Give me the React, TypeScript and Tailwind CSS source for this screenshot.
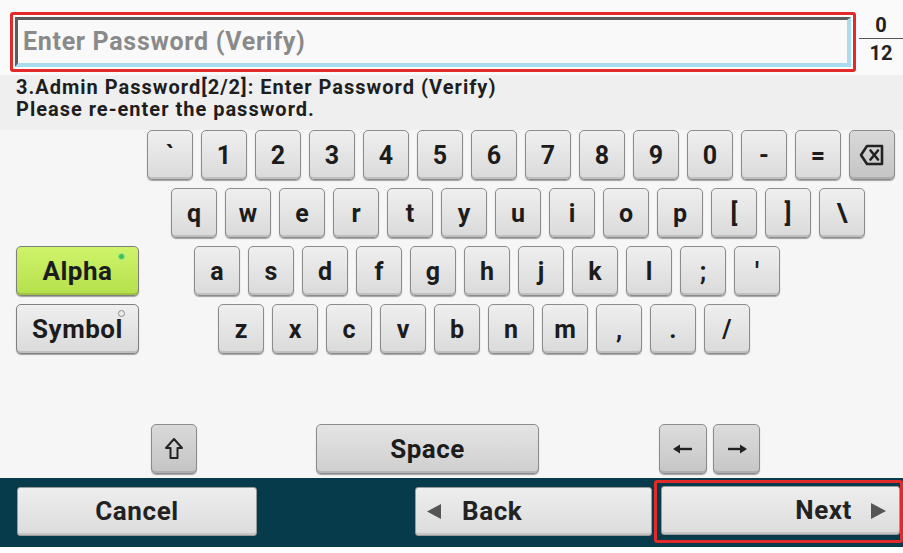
import React from 'react';

const ROW1 = ['`', '1', '2', '3', '4', '5', '6', '7', '8', '9', '0', '-', '='];
const ROW2 = ['q', 'w', 'e', 'r', 't', 'y', 'u', 'i', 'o', 'p', '[', ']', '\\'];
const ROW3 = ['a', 's', 'd', 'f', 'g', 'h', 'j', 'k', 'l', ';', "'"];
const ROW4 = ['z', 'x', 'c', 'v', 'b', 'n', 'm', ',', '.', '/'];

const keyBase =
  'flex items-center justify-center h-[50px] rounded-[5px] border border-[#8c8c8c] shadow-[inset_0_-2px_0_rgba(0,0,0,0.12),0_1px_1px_rgba(0,0,0,0.35)] text-[25px] font-bold text-[#1c1c1c] leading-none';

function Key({ label }: { label: string }) {
  return (
    <div className={`${keyBase} w-[46px] bg-gradient-to-b from-[#efefef] to-[#dadada]`}>
      {label}
    </div>
  );
}

function BackspaceIcon() {
  return (
    <svg width="26" height="22" viewBox="0 0 26 22" fill="none">
      <path d="M8 2 H23 V20 H8 L2 11 Z" stroke="#222" strokeWidth="2.6" strokeLinejoin="round" />
      <path d="M11.5 6.5 L19 15.5 M19 6.5 L11.5 15.5" stroke="#222" strokeWidth="2.6" strokeLinecap="round" />
    </svg>
  );
}

function ShiftIcon() {
  return (
    <svg width="20" height="24" viewBox="0 0 20 24" fill="none">
      <path d="M10 2 L18 11 H13.5 V21 H6.5 V11 H2 Z" stroke="#222" strokeWidth="2" strokeLinejoin="round" />
    </svg>
  );
}

function ArrowIcon({ dir }: { dir: 'left' | 'right' }) {
  return (
    <svg width="22" height="12" viewBox="0 0 22 12" fill="none" style={dir === 'right' ? { transform: 'scaleX(-1)' } : undefined}>
      <path d="M3 6 H20" stroke="#222" strokeWidth="2.4" />
      <path d="M1 6 L8 1.5 V10.5 Z" fill="#222" />
    </svg>
  );
}

function ModeButton({ label, active }: { label: string; active?: boolean }) {
  return (
    <div
      className={`relative flex items-center justify-center ml-4 w-[123px] h-[50px] rounded-[5px] border border-[#7f7f7f] shadow-[inset_0_-2px_0_rgba(0,0,0,0.12),0_1px_1px_rgba(0,0,0,0.35)] text-[26px] tracking-[0.5px] font-bold text-[#1c1c1c] ${
        active ? 'bg-gradient-to-b from-[#cff36a] to-[#b5e04a]' : 'bg-gradient-to-b from-[#efefef] to-[#dadada]'
      }`}
    >
      {label}
      {active ? (
        <span className="absolute right-[13px] top-[6px] w-[7px] h-[7px] rounded-full bg-[#38c447] border border-[#9be39f]" />
      ) : (
        <span className="absolute right-[13px] top-[5px] w-[7px] h-[7px] rounded-full border-[1.5px] border-[#8a8a8a]" />
      )}
    </div>
  );
}

function BarButton({ children, className }: { children: React.ReactNode; className?: string }) {
  return (
    <div
      className={`flex items-center h-[49px] rounded-[3px] border border-[#9a9a9a] bg-gradient-to-b from-[#eeeeee] to-[#dcdcdc] shadow-[inset_0_-2px_0_rgba(0,0,0,0.1)] text-[26px] tracking-[0.6px] font-bold text-[#222] ${className ?? ''}`}
    >
      {children}
    </div>
  );
}

export default function App() {
  return (
    <div className="w-[903px] h-[553px] bg-white flex flex-col font-['Roboto','Liberation_Sans',sans-serif] select-none">
      {/* input row */}
      <div className="h-[75px] bg-[#fafafa] flex items-start">
        <div className="mt-[12px] ml-[10px] w-[846px] h-[60px] border-[3px] border-[#e32a2a] rounded-[3px] p-[2px]">
          <div className="h-full flex items-center border-t-[3px] border-l-[3px] border-[#5c5c5c] border-r-[4px] border-b-[4px] border-r-[#a9dcf1] border-b-[#a9dcf1] bg-[#f9f9f9] pl-[5px]">
            <span className="text-[25px] tracking-[0.7px] font-bold text-[#8a8a8a] leading-none">Enter Password (Verify)</span>
          </div>
        </div>
        <div className="flex-1 flex flex-col items-center mt-[13px] ml-[3px] text-[20px] font-bold text-[#222] leading-none">
          <span className="h-[23px] flex items-center">0</span>
          <span className="w-full h-[1px] bg-[#555] my-[2px]" />
          <span className="h-[23px] flex items-center">12</span>
        </div>
      </div>

      {/* message */}
      <div className="h-[55px] bg-[#efefef] pl-[16px] pt-[1px] text-[20px] tracking-[1px] leading-[22px] font-bold text-[#1e1e1e]">
        <div>3.Admin Password[2/2]: Enter Password (Verify)</div>
        <div>Please re-enter the password.</div>
      </div>

      {/* keyboard */}
      <div className="flex-1 bg-[#f6f6f6] flex flex-col">
        <div className="flex flex-col gap-[8px]">
          <div className="flex">
            <div className="w-[147px]" />
            <div className="flex gap-[8px]">
              {ROW1.map((k) => (
                <Key key={k} label={k} />
              ))}
              <div className={`${keyBase} w-[46px] bg-gradient-to-b from-[#d9d9d9] to-[#c4c4c4]`}>
                <BackspaceIcon />
              </div>
            </div>
          </div>
          <div className="flex">
            <div className="w-[171px]" />
            <div className="flex gap-[8px]">
              {ROW2.map((k) => (
                <Key key={k} label={k} />
              ))}
            </div>
          </div>
          <div className="flex">
            <div className="w-[194px] flex">
              <ModeButton label="Alpha" active />
            </div>
            <div className="flex gap-[8px]">
              {ROW3.map((k) => (
                <Key key={k} label={k} />
              ))}
            </div>
          </div>
          <div className="flex">
            <div className="w-[218px] flex">
              <ModeButton label="Symbol" />
            </div>
            <div className="flex gap-[8px]">
              {ROW4.map((k) => (
                <Key key={k} label={k} />
              ))}
            </div>
          </div>
        </div>

        <div className="flex mt-[70px]">
          <div className={`${keyBase} ml-[151px] w-[46px] bg-gradient-to-b from-[#d9d9d9] to-[#c4c4c4]`}>
            <ShiftIcon />
          </div>
          <div className={`${keyBase} ml-[119px] w-[223px] bg-gradient-to-b from-[#e4e4e4] to-[#cfcfcf] text-[26px] tracking-[0.5px]`}>Space</div>
          <div className={`${keyBase} ml-[120px] w-[48px] bg-gradient-to-b from-[#dcdcdc] to-[#c6c6c6]`}>
            <ArrowIcon dir="left" />
          </div>
          <div className={`${keyBase} ml-[6px] w-[47px] bg-gradient-to-b from-[#dcdcdc] to-[#c6c6c6]`}>
            <ArrowIcon dir="right" />
          </div>
        </div>

        <div className="mt-[4px] h-[69px] bg-[#053b4b] flex items-start">
          <BarButton className="mt-[9px] ml-[17px] w-[240px] justify-center">Cancel</BarButton>
          <BarButton className="mt-[9px] ml-[158px] w-[237px] pl-[10px]">
            <svg width="16" height="17" viewBox="0 0 16 17" className="mr-[20px]">
              <path d="M1 8.5 L15 1 V16 Z" fill="#555" />
            </svg>
            Back
          </BarButton>
          <div className="mt-[2px] ml-[2px] w-[249px] h-[63px] border-[3px] border-[#e32a2a] rounded-[3px] pl-[4px] pt-[3px]">
            <BarButton className="w-full justify-end pr-[12px]">
              Next
              <svg width="17" height="18" viewBox="0 0 17 18" className="ml-[18px]">
                <path d="M16 9 L1 1 V17 Z" fill="#555" />
              </svg>
            </BarButton>
          </div>
        </div>
        <div className="h-[6px] bg-white" />
      </div>
    </div>
  );
}
